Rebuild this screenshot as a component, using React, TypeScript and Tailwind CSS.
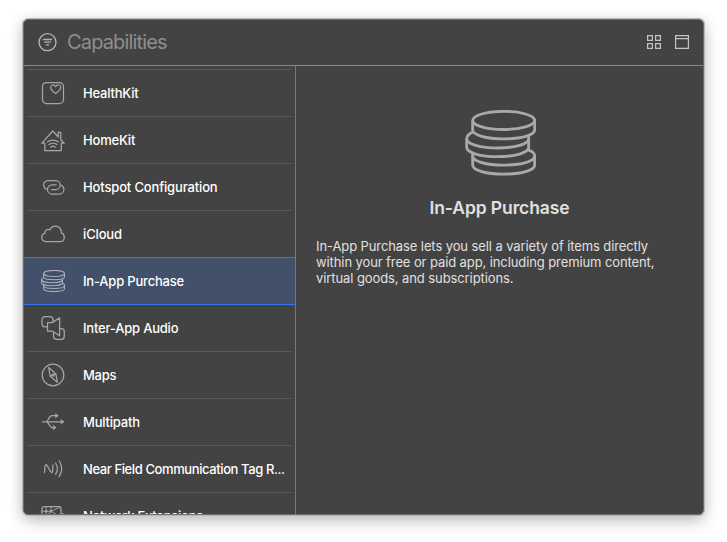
import type { ReactNode } from "react";

function Glyph({ children }: { children: ReactNode }) {
  return (
    <svg width="24" height="24" viewBox="0 0 24 24" fill="none" stroke="currentColor" strokeWidth="1.25" strokeLinejoin="round" strokeLinecap="round" className="shrink-0">
      {children}
    </svg>
  );
}

function Coins({ className, strokeWidth }: { className: string; strokeWidth: number }) {
  return (
    <svg viewBox="74 61 213 195" preserveAspectRatio="none" fill="none" stroke="currentColor" strokeWidth={strokeWidth} strokeLinejoin="round" className={className}>
      <ellipse cx="190" cy="92" rx="93" ry="27" />
      <path d="M97 92V120C97 136 138 147 190 147S283 136 283 120V92" />
      <path d="M98 127C85 132 79 139 79 147C79 162 120 174 172 174S265 162 265 147V137" />
      <path d="M79 147V173C79 188 120 200 172 200S265 188 265 173V147" />
      <path d="M97 190V198C97 214 138 225 190 225S283 214 283 198C283 191 276 184 263 180" />
      <path d="M97 198V225C97 241 138 252 190 252S283 241 283 225V198" />
    </svg>
  );
}

const items: { name: string; tracking: string; icon: ReactNode; active?: boolean }[] = [
  {
    name: "HealthKit",
    tracking: "tracking-[-0.2px]",
    icon: (
      <Glyph>
        <rect x="1.5" y="1.5" width="21" height="21" rx="4" />
        <path d="M14.6 12.6C11.5 10.2 9.7 8.6 9.7 6.5C9.7 3.7 13.3 2.9 14.6 5.7C15.9 2.9 19.8 3.7 19.8 6.5C19.8 8.6 17.7 10.2 14.6 12.6Z" />
      </Glyph>
    ),
  },
  {
    name: "HomeKit",
    tracking: "tracking-[-0.2px]",
    icon: (
      <Glyph>
        <path d="M3.8 15.2H.8L11.8 3L17.2 9V4.3H19.8V11.8L23.2 15.2H20.3V22.5H3.8Z" />
        <path d="M6.5 13.8C9.6 11.5 14.2 11.5 17.3 13.8M8 16.6C10.2 14.8 13.7 14.8 15.9 16.6M9.7 19.2C11 18 12.9 18 14.2 19.2" />
      </Glyph>
    ),
  },
  {
    name: "Hotspot Configuration",
    tracking: "tracking-[-0.15px]",
    icon: (
      <Glyph>
        <path d="M5.2 14.1C3.7 13.3 2.6 11.8 2.6 10A4.5 4.5 0 0 1 7.1 5.5H14.7A4.5 4.5 0 0 1 14.7 14.5H10.5" />
        <path d="M19.7 10C21.6 10.7 22.9 12.3 22.9 14.5A4.5 4.5 0 0 1 18.4 19H11.1A4.6 4.6 0 0 1 11.1 9.8H15.2" />
      </Glyph>
    ),
  },
  {
    name: "iCloud",
    tracking: "tracking-[-0.15px]",
    icon: (
      <Glyph>
        <path d="M5.2 19.7C2.5 19.7.8 18 .8 15.5C.8 13.2 2.1 11.7 4 11.1C3.7 8.5 6.5 6.6 8.7 8C9.9 5.5 11.8 4.1 14.3 4.1C18 4.1 20.5 6.9 20.4 10.8C22.3 11.6 23.3 13.2 23.3 15.2C23.3 17.9 21.5 19.7 18.9 19.7Z" />
      </Glyph>
    ),
  },
  {
    name: "In-App Purchase",
    tracking: "tracking-[-0.2px]",
    active: true,
    icon: <Coins className="h-[22px] w-6 shrink-0" strokeWidth={9.5} />,
  },
  {
    name: "Inter-App Audio",
    tracking: "tracking-[-0.2px]",
    icon: (
      <Glyph>
        <path d="M6.5 10.8H4A3 3 0 0 1 1 7.8V3.7A3 3 0 0 1 4 .7H9A3 3 0 0 1 12 3.7V5.7M18.6 12.7H20.3A3 3 0 0 1 23.3 15.7V20.3A3 3 0 0 1 20.3 23.3H15.5A3 3 0 0 1 12.5 20.3V16" />
        <path d="M6.5 6.7H11L18.6 1.9V19.8L11 15H6.5Z" />
      </Glyph>
    ),
  },
  {
    name: "Maps",
    tracking: "tracking-[-0.3px]",
    icon: (
      <Glyph>
        <circle cx="12" cy="12" r="10.8" />
        <path d="M7.7 4.5L14.9 11L16.3 19.4L9.1 13Z" />
        <circle cx="12" cy="12" r="1" />
        <path d="M9.1 13L11 12.4M13 11.6L14.9 11" />
      </Glyph>
    ),
  },
  {
    name: "Multipath",
    tracking: "tracking-[-0.2px]",
    icon: (
      <Glyph>
        <path d="M1.5 11.8H22.3M4.7 11.8C8.2 11.8 7.2 5.7 11 5.7H16.5M5.7 11.8C8.4 12.2 7.8 17.5 11 17.5H14.5" />
        <path d="M20.2 9.7L22.9 11.8L20.2 13.9ZM14.7 3.5L17.4 5.7L14.7 7.8ZM12.4 15.4L15.1 17.5L12.4 19.7Z" fill="currentColor" strokeWidth=".5" />
      </Glyph>
    ),
  },
  {
    name: "Near Field Communication Tag R...",
    tracking: "tracking-[-0.4px]",
    icon: (
      <Glyph>
        <path d="M3.5 15.5L4.1 9.1Q4.4 6.8 6.1 8.4L9.7 14.7Q11.2 16.5 11.6 14.3L12 7.8M14.6 6Q18.2 11.7 14.6 17.4M18.2 3.8Q23 11.7 18.2 19.6" />
      </Glyph>
    ),
  },
  {
    name: "Network Extensions",
    tracking: "tracking-[-0.25px]",
    icon: (
      <Glyph>
        <path d="M3.5 18H17.5A2.5 2.5 0 0 0 20 15.5V5A2.5 2.5 0 0 0 17.5 2.5H3.5A2.5 2.5 0 0 0 1 5V15.5A2.5 2.5 0 0 0 3.5 18Z" />
        <path d="M1 7.3H10L19.5 3M5.2 3V16M10 3V7.3L18 12M10 7L5 13M20 9.5H21.5A2 2 0 0 1 23.5 11.5V18" strokeWidth=".9" />
        <circle cx="5.2" cy="7.3" r=".8" fill="currentColor" />
        <circle cx="10" cy="7.3" r=".8" fill="currentColor" />
      </Glyph>
    ),
  },
];

export default function App() {
  return (
    <div className="h-[542px] w-[727px] overflow-hidden bg-white pt-[19px] pl-[23px] font-['Inter','Liberation_Sans',sans-serif]">
      <div className="h-[496px] w-[681px] rounded-[5px] shadow-[0_0_0_1px_#b8b8b8,0_6px_16px_rgba(0,0,0,0.24),0_0_14px_rgba(0,0,0,0.08)]">
        <div className="flex h-full flex-col overflow-hidden rounded-[5px] border border-[#6c6c6c] bg-[#434343]">
          <header className="flex h-[46px] shrink-0 items-center border-b border-[#888] pr-[14px] pb-px pl-[14px] text-[#b4b4b4]">
            <svg width="20" height="20" viewBox="0 0 20 20" fill="none" stroke="currentColor" strokeWidth="1.3">
              <circle cx="9.5" cy="10.2" r="8.5" />
              <path d="M4.9 7.5H14.1M6.3 10.2H12.7M7.9 12.9H11.1" />
            </svg>
            <span className="ml-[9px] text-[20px] leading-6 font-normal tracking-[-0.85px] whitespace-nowrap text-[#8e8e8e]">Capabilities</span>
            <div className="ml-auto flex gap-[14px]">
              <svg width="14" height="14" viewBox="0 0 14 14" fill="none" stroke="#c4c4c4" strokeWidth="1.2">
                <path d="M.6.6H5.4V5.4H.6ZM8.6.6H13.4V5.4H8.6ZM.6 8.6H5.4V13.4H.6ZM8.6 8.6H13.4V13.4H8.6Z" />
              </svg>
              <svg width="14" height="14" viewBox="0 0 14 14" fill="none" stroke="#c4c4c4" strokeWidth="1.2">
                <path d="M.6.6H13.4V13.4H.6ZM.6 3.6H13.4" />
              </svg>
            </div>
          </header>
          <div className="flex min-h-0 flex-1">
            <aside className="w-[272px] shrink-0 overflow-hidden border-r border-[#777]">
              <div className="mr-[3px] ml-[3px] h-1 border-b border-[#595959]" />
              <ul>
                {items.map((item, i) => (
                  <li
                    key={item.name}
                    className={
                      item.active
                        ? "-mt-px flex h-12 items-center border-y border-[#3376ee] bg-[#435069] pl-[17px] text-[#a9b0bc]"
                        : i === 3
                          ? "mx-[3px] flex h-[47px] items-center border-b border-transparent pl-[14px] text-[#a6a6a6]"
                          : "mx-[3px] flex h-[47px] items-center border-b border-[#595959] pl-[14px] text-[#a6a6a6]"
                    }
                  >
                    {item.icon}
                    <span className={`ml-[18px] text-[13px] leading-4 font-medium whitespace-nowrap text-white ${item.tracking}`}>{item.name}</span>
                  </li>
                ))}
              </ul>
            </aside>
            <main className="flex-1 px-5 pt-[44px] text-[#e0e0e0]">
              <Coins className="ml-[148.5px] h-[65.5px] w-[71px] text-[#a9a9a9]" strokeWidth={8.5} />
              <h1 className="mt-[20.5px] text-center text-[17.5px] leading-6 font-semibold tracking-[-0.1px]">In-App Purchase</h1>
              <p className="mt-[18px] text-[13px] leading-4 whitespace-nowrap">
                <span className="block tracking-[-0.1px]">In-App Purchase lets you sell a variety of items directly</span>
                <span className="block tracking-[-0.1px]">within your free or paid app, including premium content,</span>
                <span className="block tracking-[-0.09px]">virtual goods, and subscriptions.</span>
              </p>
            </main>
          </div>
        </div>
      </div>
    </div>
  );
}
